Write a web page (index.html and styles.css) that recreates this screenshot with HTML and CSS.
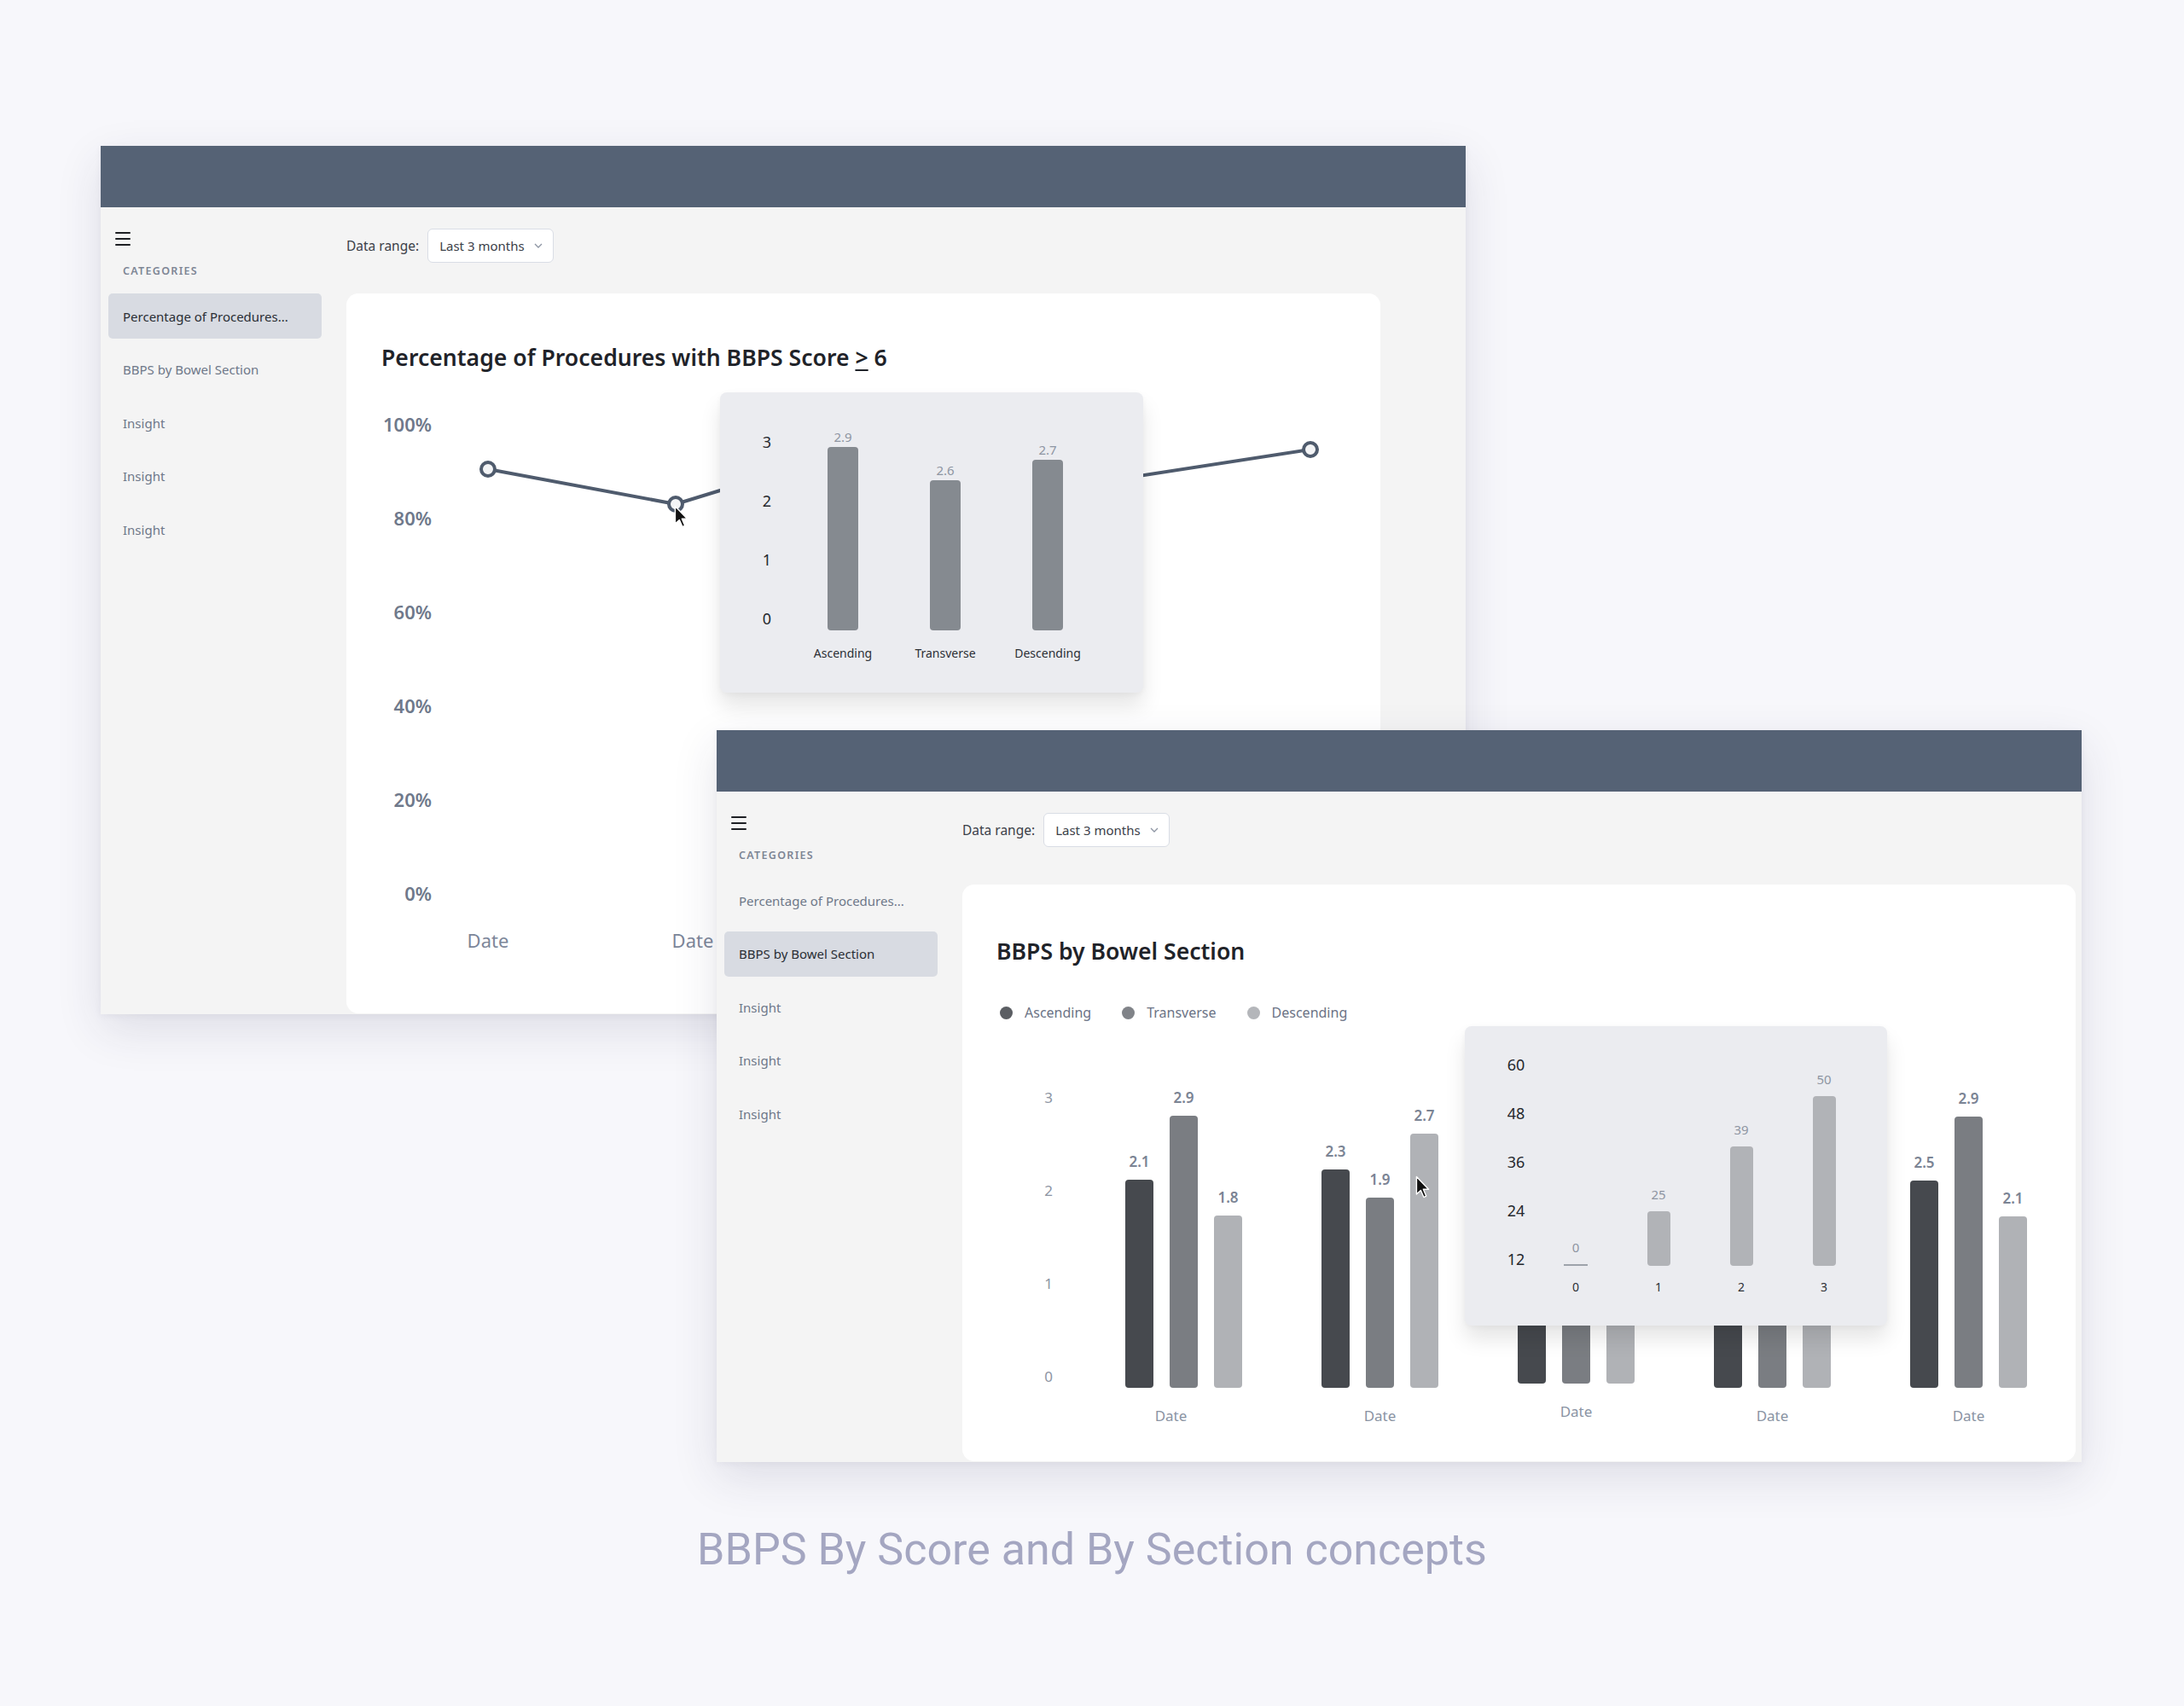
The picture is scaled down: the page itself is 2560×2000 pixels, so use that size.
FILE: index.html
```html
<!DOCTYPE html>
<html lang="en">
<head>
<meta charset="utf-8">
<title>BBPS By Score and By Section concepts</title>
<link rel="stylesheet" href="styles.css">
</head>
<body>
<div class="stage">

  <section class="window window--score">
    <header class="win-header"></header>
    <div class="win-body">
      <aside class="sidebar">
        <div class="hamburger"><span></span><span></span><span></span></div>
        <div class="cat-label">CATEGORIES</div>
        <ul class="nav">
          <li class="nav-item is-active">Percentage of Procedures...</li>
          <li class="nav-item">BBPS by Bowel Section</li>
          <li class="nav-item">Insight</li>
          <li class="nav-item">Insight</li>
          <li class="nav-item">Insight</li>
        </ul>
      </aside>
      <main class="main">
        <div class="toolbar">
          <span class="toolbar-label">Data range:</span>
          <div class="select">
            <span>Last 3 months</span>
            <svg class="chev" viewBox="0 0 10 6"><path d="M1 1 L5 5 L9 1" /></svg>
          </div>
        </div>
        <div class="card">
          <h2 class="card-title">Percentage of Procedures with BBPS Score <span class="ge">&gt;</span> 6</h2>
          <div class="line-chart">
            <div class="l-yaxis">
              <span>100%</span><span>80%</span><span>60%</span><span>40%</span><span>20%</span><span>0%</span>
            </div>
            <div class="plot">
              <svg width="1111" height="580" viewBox="0 0 1111 580">
                <polyline class="line" points="66,67 286,108 504,41 744,88 1030,44"/>
                <circle class="pt" cx="66" cy="67" r="8"/>
                <circle class="pt" cx="286" cy="108" r="8"/>
                <circle class="pt" cx="504" cy="41" r="8"/>
                <circle class="pt" cx="744" cy="88" r="8"/>
                <circle class="pt" cx="1030" cy="44" r="8"/>
              </svg>
            </div>
            <div class="l-xaxis">
              <span>Date</span><span>Date</span>
            </div>
          </div>

          <div class="popup popup--sections">
            <div class="pop-yaxis"><span>3</span><span>2</span><span>1</span><span>0</span></div>
            <div class="pop-cols">
              <div class="pop-col">
                <div class="pop-bars"><span class="pop-val">2.9</span><span class="pop-bar" style="height:215px"></span></div>
                <span class="pop-xlabel">Ascending</span>
              </div>
              <div class="pop-col">
                <div class="pop-bars"><span class="pop-val">2.6</span><span class="pop-bar" style="height:176px"></span></div>
                <span class="pop-xlabel">Transverse</span>
              </div>
              <div class="pop-col">
                <div class="pop-bars"><span class="pop-val">2.7</span><span class="pop-bar" style="height:200px"></span></div>
                <span class="pop-xlabel">Descending</span>
              </div>
            </div>
          </div>

          <svg class="cursor cursor--one" viewBox="0 0 12 19"><path d="M1 1 L1 15.5 L4.5 12.3 L7 18 L9 17 L6.6 11.4 L11 11.4 Z"/></svg>
        </div>
      </main>
    </div>
  </section>

  <section class="window window--section">
    <header class="win-header"></header>
    <div class="win-body">
      <aside class="sidebar">
        <div class="hamburger"><span></span><span></span><span></span></div>
        <div class="cat-label">CATEGORIES</div>
        <ul class="nav">
          <li class="nav-item">Percentage of Procedures...</li>
          <li class="nav-item is-active">BBPS by Bowel Section</li>
          <li class="nav-item">Insight</li>
          <li class="nav-item">Insight</li>
          <li class="nav-item">Insight</li>
        </ul>
      </aside>
      <main class="main">
        <div class="toolbar">
          <span class="toolbar-label">Data range:</span>
          <div class="select">
            <span>Last 3 months</span>
            <svg class="chev" viewBox="0 0 10 6"><path d="M1 1 L5 5 L9 1" /></svg>
          </div>
        </div>
        <div class="card">
          <h2 class="card-title">BBPS by Bowel Section</h2>
          <div class="legend">
            <span class="legend-item"><i class="dot dot--asc"></i>Ascending</span>
            <span class="legend-item"><i class="dot dot--tra"></i>Transverse</span>
            <span class="legend-item"><i class="dot dot--des"></i>Descending</span>
          </div>
          <div class="bar-chart">
            <div class="b-yaxis"><span>3</span><span>2</span><span>1</span><span>0</span></div>
            <div class="b-groups">
              <div class="b-group">
                <div class="b-bars">
                  <div class="b-col"><span class="b-val">2.1</span><span class="b-bar c-asc" style="height:244px"></span></div>
                  <div class="b-col"><span class="b-val">2.9</span><span class="b-bar c-tra" style="height:319px"></span></div>
                  <div class="b-col"><span class="b-val">1.8</span><span class="b-bar c-des" style="height:202px"></span></div>
                </div>
                <span class="b-date b-date--left">Date</span>
              </div>
              <div class="b-group">
                <div class="b-bars">
                  <div class="b-col"><span class="b-val">2.3</span><span class="b-bar c-asc" style="height:256px"></span></div>
                  <div class="b-col"><span class="b-val">1.9</span><span class="b-bar c-tra" style="height:223px"></span></div>
                  <div class="b-col"><span class="b-val">2.7</span><span class="b-bar c-des" style="height:298px"></span></div>
                </div>
                <span class="b-date">Date</span>
              </div>
              <div class="b-group b-group--raised">
                <div class="b-bars">
                  <div class="b-col"><span class="b-val">2.2</span><span class="b-bar c-asc" style="height:250px"></span></div>
                  <div class="b-col"><span class="b-val">2.4</span><span class="b-bar c-tra" style="height:272px"></span></div>
                  <div class="b-col"><span class="b-val">2.0</span><span class="b-bar c-des" style="height:228px"></span></div>
                </div>
                <span class="b-date">Date</span>
              </div>
              <div class="b-group">
                <div class="b-bars">
                  <div class="b-col"><span class="b-val">2.1</span><span class="b-bar c-asc" style="height:240px"></span></div>
                  <div class="b-col"><span class="b-val">2.6</span><span class="b-bar c-tra" style="height:290px"></span></div>
                  <div class="b-col"><span class="b-val">2.2</span><span class="b-bar c-des" style="height:250px"></span></div>
                </div>
                <span class="b-date">Date</span>
              </div>
              <div class="b-group">
                <div class="b-bars">
                  <div class="b-col"><span class="b-val">2.5</span><span class="b-bar c-asc" style="height:243px"></span></div>
                  <div class="b-col"><span class="b-val">2.9</span><span class="b-bar c-tra" style="height:318px"></span></div>
                  <div class="b-col"><span class="b-val">2.1</span><span class="b-bar c-des" style="height:201px"></span></div>
                </div>
                <span class="b-date">Date</span>
              </div>
            </div>
          </div>

          <div class="popup popup--scores">
            <div class="pop-yaxis"><span>60</span><span>48</span><span>36</span><span>24</span><span>12</span></div>
            <div class="pop-cols">
              <div class="pop-col">
                <div class="pop-bars"><span class="pop-val">0</span><span class="pop-bar pop-bar--zero"></span></div>
                <span class="pop-xlabel">0</span>
              </div>
              <div class="pop-col">
                <div class="pop-bars"><span class="pop-val">25</span><span class="pop-bar" style="height:64px"></span></div>
                <span class="pop-xlabel">1</span>
              </div>
              <div class="pop-col">
                <div class="pop-bars"><span class="pop-val">39</span><span class="pop-bar" style="height:140px"></span></div>
                <span class="pop-xlabel">2</span>
              </div>
              <div class="pop-col">
                <div class="pop-bars"><span class="pop-val">50</span><span class="pop-bar" style="height:199px"></span></div>
                <span class="pop-xlabel">3</span>
              </div>
            </div>
          </div>

          <svg class="cursor cursor--two" viewBox="0 0 12 19"><path d="M1 1 L1 15.5 L4.5 12.3 L7 18 L9 17 L6.6 11.4 L11 11.4 Z"/></svg>
        </div>
      </main>
    </div>
  </section>

</div>
<p class="caption">BBPS By Score and By Section concepts</p>
</body>
</html>
```

FILE: styles.css
```css
* { box-sizing: border-box; margin: 0; padding: 0; }

html, body { width: 2560px; height: 2000px; }

body {
  background: #f7f7fb;
  font-family: "Noto Sans", "DejaVu Sans", sans-serif;
  overflow: hidden;
}

.stage { position: relative; height: 1789px; }

/* ---------- windows ---------- */
.window {
  position: absolute;
  width: 1600px;
  display: flex;
  flex-direction: column;
  background: #f4f4f4;
  overflow: hidden;
  box-shadow: 0 18px 50px rgba(40, 44, 80, 0.12), 0 2px 8px rgba(40, 44, 80, 0.05);
}
.window--score { left: 118px; top: 171px; height: 1018px; }
.window--section { left: 840px; top: 856px; height: 858px; }

.win-header { height: 72px; flex: none; background: #556275; }
.win-body { flex: 1; display: flex; min-height: 0; }

/* ---------- sidebar ---------- */
.sidebar { width: 288px; flex: none; padding: 29px 0 0 9px; }

.hamburger {
  width: 18px; height: 16px; margin-left: 8px;
  display: flex; flex-direction: column; justify-content: space-between;
}
.hamburger span { height: 2px; background: #1d1f23; border-radius: 1px; }

.cat-label {
  margin: 21px 0 0 17px;
  font-size: 12.5px; line-height: 18px; font-weight: 600;
  letter-spacing: 1.3px; color: #7d8594;
}

.nav { list-style: none; margin-top: 17px; display: flex; flex-direction: column; gap: 9.5px; width: 250px; }
.nav-item {
  height: 53px; display: flex; align-items: center; padding-left: 17px;
  font-size: 15px; color: #6e7889; border-radius: 5px;
}
.nav-item.is-active { background: #d8dbe2; color: #2a2e35; }

/* ---------- main ---------- */
.main { flex: 1; min-width: 0; display: flex; flex-direction: column; padding-top: 25px; }

.toolbar { display: flex; align-items: center; gap: 10px; height: 40px; flex: none; }
.toolbar-label { font-size: 15.5px; color: #3b4048; }
.select {
  width: 148px; height: 40px;
  display: flex; align-items: center; justify-content: space-between;
  padding: 0 12px 0 13px;
  background: #fff; border: 1px solid #d9dde5; border-radius: 6px;
  font-size: 15px; color: #3b4048;
}
.chev { width: 10px; height: 6px; }
.chev path { fill: none; stroke: #8d95a3; stroke-width: 1.3; }

.card { position: relative; background: #fff; border-radius: 14px; flex: 1; }
.window--score .card { width: 1212px; margin: 36px 0 1px; padding: 57px 0 0 41px; }
.window--section .card { width: 1305px; margin: 44px 0 1px; padding: 60px 0 0 40px; }

.card-title { font-size: 26.6px; line-height: 36px; font-weight: 600; color: #1f2329; }
.ge { text-decoration: underline; text-underline-offset: 4px; text-decoration-thickness: 2px; }

/* ---------- line chart ---------- */
.line-chart { display: grid; grid-template-columns: 59px 1111px; margin-top: 45px; }
.l-yaxis {
  display: flex; flex-direction: column; gap: 80px; text-align: right;
  font-size: 22px; line-height: 30px; font-weight: 600; color: #6f798b;
}
.plot { height: 580px; margin-top: 1px; }
.plot svg { display: block; overflow: visible; }
.line { fill: none; stroke: #4f5b6d; stroke-width: 4; stroke-linejoin: round; }
.pt { fill: #f3f4f6; stroke: #4f5b6d; stroke-width: 4; }
.l-xaxis { grid-column: 2; display: flex; gap: 160px; padding-left: 26px; margin-top: 24px; }
.l-xaxis span { width: 80px; text-align: center; font-size: 22px; line-height: 30px; color: #7c8699; }

/* ---------- popups ---------- */
.popup {
  position: absolute; display: flex;
  background: #ebecf0; border-radius: 8px;
  box-shadow: 0 16px 24px rgba(0, 0, 0, 0.10), 0 2px 6px rgba(0, 0, 0, 0.04);
}
.popup--sections { left: 438px; top: 116px; width: 496px; height: 352px; padding: 30px 0 0 40px; }
.popup--scores { left: 589px; top: 166px; width: 495px; height: 351px; padding: 34px 0 0 45px; }

.pop-yaxis {
  width: 30px; display: flex; flex-direction: column; text-align: center;
  font-size: 18px; line-height: 22px; color: #25282d;
}
.popup--sections .pop-yaxis { padding-top: 17px; gap: 47px; }
.popup--scores .pop-yaxis { gap: 35px; }

.pop-cols { display: flex; }
.popup--sections .pop-cols { margin-left: 14px; }
.popup--scores .pop-cols { margin-left: 6.5px; }

.pop-col { display: flex; flex-direction: column; align-items: center; }
.popup--sections .pop-col { width: 120px; }
.popup--scores .pop-col { width: 97px; }

.pop-bars { display: flex; flex-direction: column; justify-content: flex-end; align-items: center; }
.popup--sections .pop-bars { height: 249px; gap: 2px; }
.popup--scores .pop-bars { height: 247px; gap: 10px; }

.pop-val { font-size: 15px; line-height: 20px; color: #8e95a2; }
.pop-bar { display: block; border-radius: 4px; }
.popup--sections .pop-bar { width: 36px; background: #858a90; }
.popup--scores .pop-bar { width: 27px; background: #b1b3b7; }
.popup--scores .pop-bar--zero { width: 28px; height: 2px; border-radius: 0; background: #9ea3ab; }

.pop-xlabel { font-size: 14px; line-height: 20px; color: #2c2f35; }
.popup--sections .pop-xlabel { margin-top: 17px; }
.popup--scores .pop-xlabel { margin-top: 15px; }

/* ---------- bar chart ---------- */
.legend {
  display: flex; align-items: center; gap: 36px;
  margin-top: 44px; padding-left: 4px;
  font-size: 16px; line-height: 20px; color: #6b7385;
}
.legend-item { display: flex; align-items: center; gap: 14px; }
.dot { display: block; width: 15px; height: 15px; border-radius: 50%; }
.dot--asc { background: #5b5e63; }
.dot--tra { background: #808388; }
.dot--des { background: #b4b6ba; }

.bar-chart { display: flex; margin-top: 78px; }
.b-yaxis {
  width: 20px; margin-left: 51px;
  display: flex; flex-direction: column; gap: 85px; text-align: center;
  font-size: 17px; line-height: 24px; color: #8d95a3;
}
.b-groups { display: flex; align-items: flex-start; gap: 93px; margin-left: 80px; }
.b-group { display: flex; flex-direction: column; align-items: center; }
.b-group--raised { margin-top: -5px; }
.b-bars { display: flex; align-items: flex-end; gap: 19px; height: 352px; }
.b-col { display: flex; flex-direction: column; align-items: center; gap: 9px; }
.b-val { font-size: 17px; line-height: 24px; font-weight: 600; color: #7b8494; }
.b-bar { display: block; width: 33px; border-radius: 4px; }
.c-asc { background: #46494e; }
.c-tra { background: #7a7d82; }
.c-des { background: #b0b2b6; }
.b-date { margin-top: 21px; font-size: 17px; line-height: 24px; color: #8a93a3; }
.b-date--left { margin-right: 30px; }

/* ---------- cursors ---------- */
.cursor { position: absolute; width: 17px; height: 27px; overflow: visible; }
.cursor path { fill: #111; stroke: #fff; stroke-width: 1; stroke-linejoin: round; }
.cursor--one { left: 384px; top: 248px; }
.cursor--two { left: 531px; top: 341px; }

/* ---------- caption ---------- */
.caption {
  text-align: center;
  font-family: Roboto, "Liberation Sans", sans-serif;
  font-size: 52px; line-height: 56px;
  color: #a4a6c1;
}
```
